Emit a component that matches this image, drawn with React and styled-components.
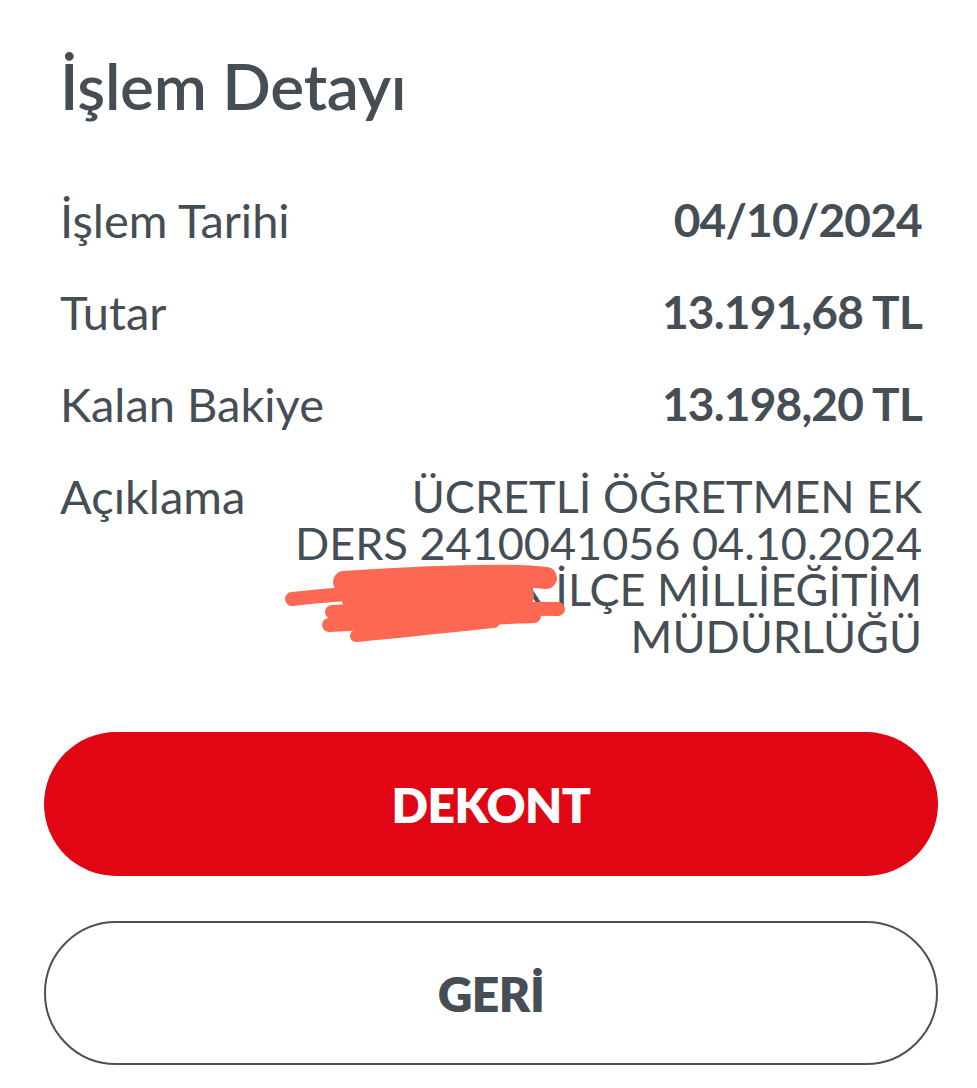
import React from 'react';
import styled, { createGlobalStyle } from 'styled-components';

const Global = createGlobalStyle`
  html, body {
    margin: 0;
    padding: 0;
    background: #ffffff;
  }
  body {
    font-family: Lato, "Open Sans", "Noto Sans", sans-serif;
    color: #454d55;
  }
`;

const Sheet = styled.div`
  width: 977px;
  height: 1088px;
  box-sizing: border-box;
  padding: 54px 39px 0 44px;
  display: flex;
  flex-direction: column;
  background: #ffffff;
`;

const Title = styled.h1`
  margin: 0 0 0 16px;
  font-size: 64px;
  font-weight: 600;
  line-height: 64px;
  letter-spacing: -0.3px;
`;

const List = styled.div`
  margin: 79px 16px 0 16px;
  display: flex;
  flex-direction: column;
  gap: 46px;
`;

const Row = styled.div`
  display: flex;
  justify-content: space-between;
  align-items: flex-start;
  font-size: 46px;
  line-height: 46px;
`;

const Label = styled.span`
  font-size: 47px;
  font-weight: 400;
  white-space: nowrap;
`;

const Value = styled.span`
  font-weight: 700;
  letter-spacing: -0.8px;
  white-space: nowrap;
`;

const Note = styled.div`
  text-align: right;
  width: 640px;
  font-size: 45px;
  line-height: 46.5px;
  font-weight: 400;
`;

const Line = styled.div`
  position: relative;
  white-space: nowrap;
`;

const Scribble = styled.svg`
  position: absolute;
  left: 2px;
  top: -4px;
  width: 285px;
  height: 80px;
  pointer-events: none;
`;

const Buttons = styled.div`
  margin-top: 73px;
  display: flex;
  flex-direction: column;
  gap: 45px;
`;

const Button = styled.button`
  height: 144px;
  width: 100%;
  border-radius: 72px;
  font-family: Lato, "Open Sans", sans-serif;
  font-size: 48px;
  font-weight: 800;
  letter-spacing: -0.5px;
  cursor: pointer;
  background: ${p => (p.$primary ? '#e00614' : '#ffffff')};
  color: ${p => (p.$primary ? '#ffffff' : '#454d55')};
  border: ${p => (p.$primary ? 'none' : '2.5px solid #4a5258')};
`;

const rows = [
  { label: 'İşlem Tarihi', value: '04/10/2024' },
  { label: 'Tutar', value: '13.191,68 TL' },
  { label: 'Kalan Bakiye', value: '13.198,20 TL' },
];

export default function App() {
  return (
    <>
      <Global />
      <Sheet>
        <Title>İşlem Detayı</Title>
        <List>
          {rows.map(r => (
            <Row key={r.label}>
              <Label>{r.label}</Label>
              <Value>{r.value}</Value>
            </Row>
          ))}
          <Row>
            <Label>Açıklama</Label>
            <Note>
              <Line>ÜCRETLİ ÖĞRETMEN EK</Line>
              <Line>DERS 2410041056 04.10.2024</Line>
              <Line>
                XXXXX İLÇE MİLLİEĞİTİM
                <Scribble viewBox="0 0 285 80">
                  <g fill="none" stroke="#fd6853" strokeLinecap="round">
                    <path d="M60 20 C 150 14, 230 12, 262 16" strokeWidth="22" />
                    <path d="M8 37 C 60 31, 120 28, 200 28" strokeWidth="14" />
                    <path d="M70 38 L 238 34" strokeWidth="24" />
                    <path d="M48 50 C 140 46, 220 46, 274 47" strokeWidth="14" />
                    <path d="M45 63 C 120 59, 200 56, 250 54" strokeWidth="14" />
                    <path d="M72 74 C 120 70, 170 64, 210 60" strokeWidth="12" />
                  </g>
                </Scribble>
              </Line>
              <Line>MÜDÜRLÜĞÜ</Line>
            </Note>
          </Row>
        </List>
        <Buttons>
          <Button $primary>DEKONT</Button>
          <Button>GERİ</Button>
        </Buttons>
      </Sheet>
    </>
  );
}
